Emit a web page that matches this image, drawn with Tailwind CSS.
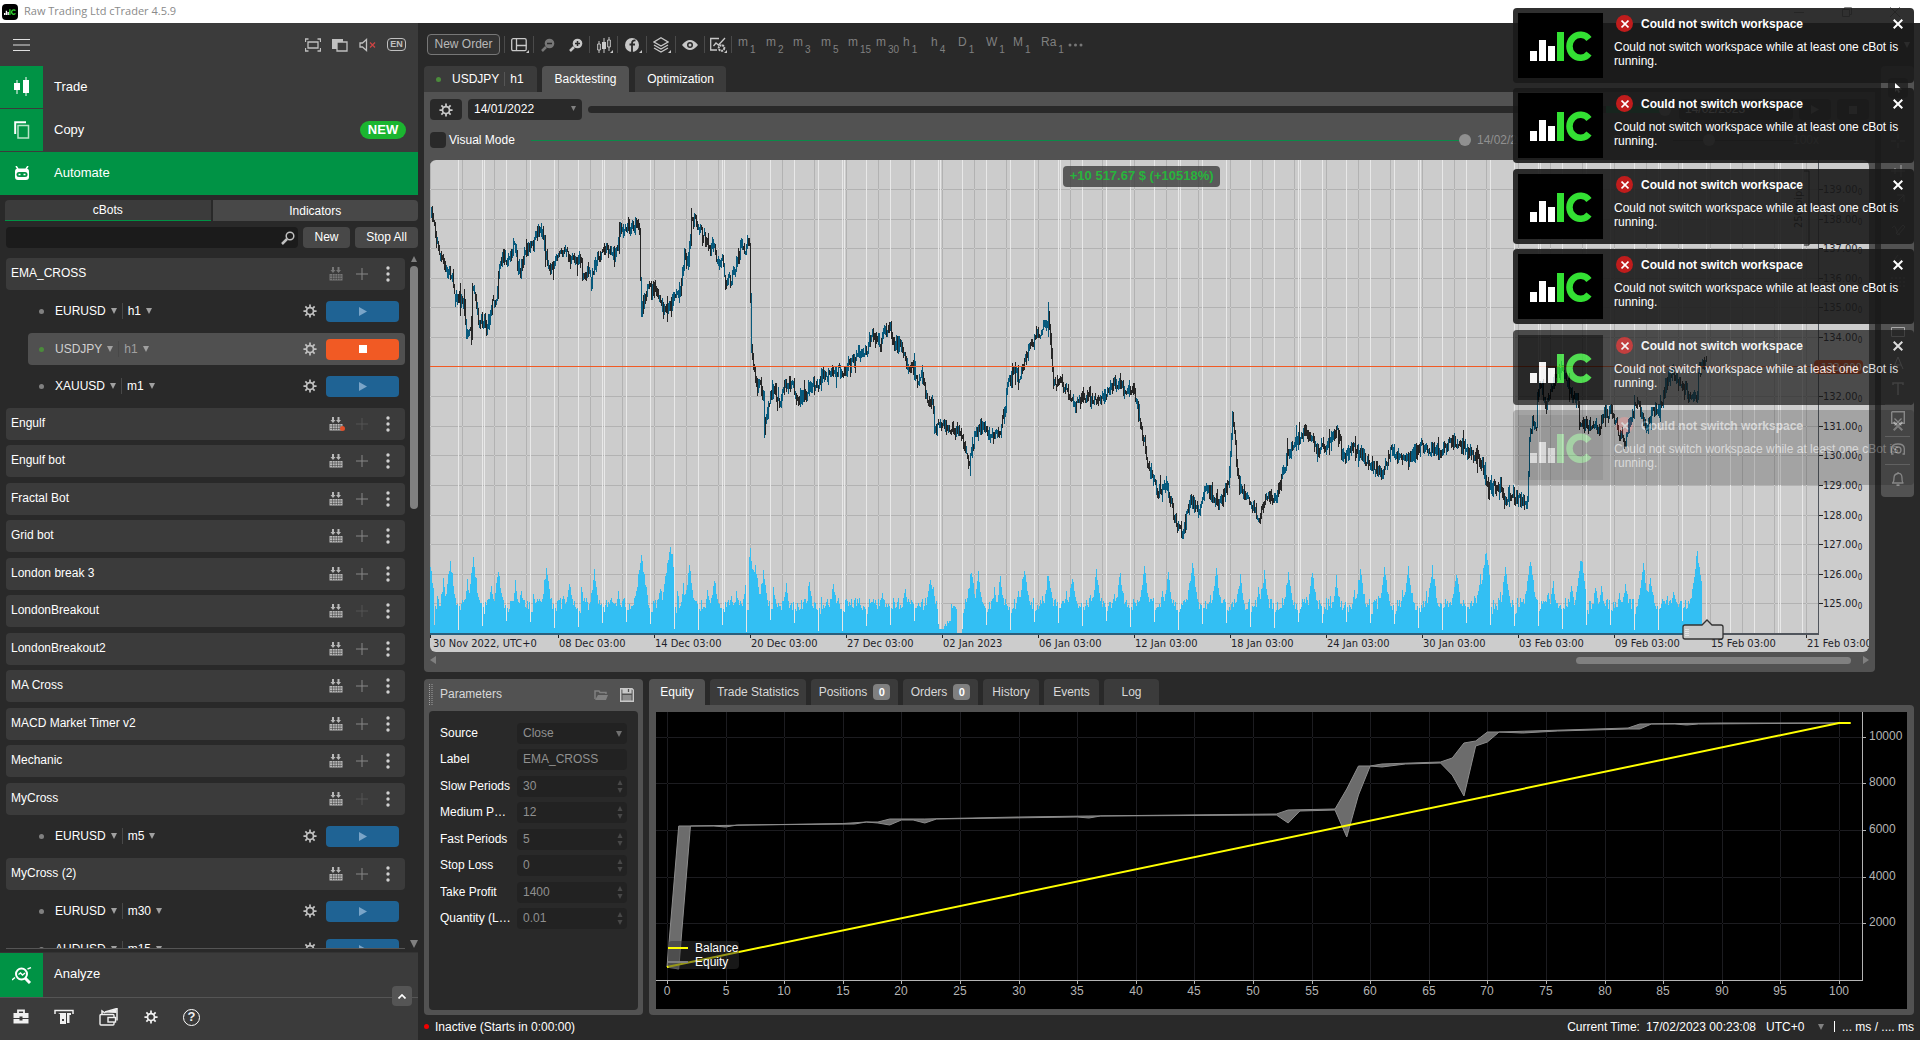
<!DOCTYPE html>
<html lang="en">
  <head>
    <meta charset="UTF-8" />
    <title>Raw Trading Ltd cTrader 4.5.9</title>
    <script src="https://cdn.jsdelivr.net/npm/@tailwindcss/browser@4"></script>
  </head>
  <body class="bg-[#292929] font-['Liberation_Sans',Arial,sans-serif] text-xs text-white">
    <!-- Icon sprite -->
    <svg class="hidden">
      <symbol id="gear" viewBox="0 0 16 16"><circle cx="8" cy="8" r="4" fill="none" stroke="currentColor" stroke-width="2" /><path d="M8 .5v3M8 12.5v3M.5 8h3M12.5 8h3M2.700 2.700l2.200 2.200M11.100 11.100l2.200 2.200M13.300 2.700l-2.200 2.200M4.900 11.100l-2.200 2.200" stroke="currentColor" stroke-width="2" /></symbol>
      <symbol id="build" viewBox="0 0 14 14"><path d="M3 0h2v3h1.500L4 6 1.500 3H3zM8.500 0h2v3H12L9.500 6 7 3h1.500z" fill="currentColor" /><path d="M.5 7h13v6.500H.5z" fill="currentColor" /><path d="M1 9h12M1 11.500h12M3.500 7v6M6 7v6M8.500 7v6M11 7v6" stroke="#3b3b3b" stroke-width=".5" /></symbol>
      <symbol id="plus" viewBox="0 0 12 12"><path d="M5.500 0h1v12h-1zM0 5.500h12v1H0z" fill="currentColor" /></symbol>
      <symbol id="dots" viewBox="0 0 4 16"><circle cx="2" cy="2" r="1.700" fill="currentColor" /><circle cx="2" cy="8" r="1.700" fill="currentColor" /><circle cx="2" cy="14" r="1.700" fill="currentColor" /></symbol>
      <symbol id="down" viewBox="0 0 6 6"><path d="M0 0h6L3 6z" fill="currentColor" /></symbol>
      <symbol id="up" viewBox="0 0 6 6"><path d="M0 6h6L3 0z" fill="currentColor" /></symbol>
      <symbol id="play" viewBox="0 0 8 9"><path d="M0 0l8 4.500L0 9z" fill="currentColor" /></symbol>
      <symbol id="cross" viewBox="0 0 10 10"><path d="M.7.7l8.600 8.600M9.300.7L.7 9.300" stroke="currentColor" stroke-width="2" /></symbol>
      <symbol id="corner" viewBox="0 0 4 4"><path d="M4 0v4H0z" fill="#c8c8c8" /></symbol>
      <symbol id="lens" viewBox="0 0 14 14"><circle cx="9" cy="5" r="3.800" fill="none" stroke="currentColor" stroke-width="1.500" /><path d="M6 8L1 13" stroke="currentColor" stroke-width="2.500" /></symbol>
      <symbol id="grip" viewBox="0 0 4 22"><path d="M.5 0v22M3 0v22" stroke="#a0a0a0" stroke-dasharray="1 1" /></symbol>
      <symbol id="iclogo" viewBox="0 0 62 30"><path d="M0 20h7v10H0zM9 9h7v21H9zM18 15h7v15h-7z" fill="#fff" /><path d="M27 1h7v29h-7z" fill="#33e033" /><path d="M59 8a11 11.500 0 1 0 0 14.500" fill="none" stroke="#33e033" stroke-width="6.500" /></symbol>
    </svg>

    <div class="relative flex h-screen flex-col overflow-hidden">
      <!-- Window title bar -->
      <header class="flex h-[23px] shrink-0 items-center gap-1.5 bg-white pl-0.5 font-['Open_Sans',sans-serif] text-[11px] text-[#8a8a8a]">
        <span class="flex size-4 items-center justify-center rounded-sm bg-black"><svg class="h-1.5 w-3"><use href="#iclogo" /></svg></span>
        <span class="flex-1">Raw Trading Ltd cTrader 4.5.9</span>
        <div class="flex items-center gap-[38px] pr-5 text-[#8a8a8a]">
          <button aria-label="Minimize"><svg class="h-2.5 w-2.5" viewBox="0 0 10 10"><path d="M0 5.500h10" stroke="currentColor" /></svg></button>
          <button aria-label="Restore"><svg class="h-2.5 w-2.5" viewBox="0 0 10 10"><path d="M.5 2.500h7v7h-7zM2.500 2.500v-2h7v7h-2" fill="none" stroke="currentColor" /></svg></button>
          <button aria-label="Close"><svg class="h-2.5 w-2.5" viewBox="0 0 10 10"><path d="M0 0l10 10M10 0L0 10" stroke="currentColor" /></svg></button>
        </div>
      </header>

      <div class="flex min-h-0 flex-1">
        <!-- Sidebar -->
        <aside class="flex w-[418px] shrink-0 flex-col">
          <div class="flex h-[43px] shrink-0 items-center bg-[#3b3b3b] pr-3 pl-[13px] text-[#c0c0c0]">
            <button aria-label="Menu"><svg class="h-3.5 w-[17px]" viewBox="0 0 17 14"><path d="M0 1.500h17M0 7h17M0 12.500h17" stroke="#e0e0e0" stroke-width="1.200" /></svg></button>
            <div class="ml-auto flex items-center gap-[11px]">
              <button aria-label="Full screen"><svg class="h-3.5 w-4" viewBox="0 0 16 14"><path d="M.5 4V1h3M12.500 1h3v3M15.500 10v3h-3M3.500 13h-3v-3M3 4h10v6H3z" fill="none" stroke="currentColor" stroke-width="1.300" /></svg></button>
              <button aria-label="Windows"><svg class="h-3.5 w-4" viewBox="0 0 16 14"><path d="M0 1h11v10H0z" fill="currentColor" /><path d="M5 4h10v9H5z" fill="#3b3b3b" stroke="currentColor" stroke-width="1.300" /></svg></button>
              <button aria-label="Sound"><svg class="h-3.5 w-[17px]" viewBox="0 0 17 14"><path d="M1 5h2.500L7.500 1.500v11L3.500 9H1z" fill="none" stroke="currentColor" stroke-width="1.300" /><path d="M11 4.500l5 5M16 4.500l-5 5" stroke="#c44" stroke-width="1.300" /></svg></button>
              <button class="h-[13px] w-[19px] rounded-sm border border-[#c0c0c0] text-[9px] leading-[11px] font-bold">EN</button>
            </div>
          </div>
          <nav class="shrink-0 bg-[#3b3b3b] text-[13px]">
            <a href="#trade" class="flex h-[43px] items-center gap-[11px] pb-0.5">
              <span class="flex h-[42px] w-[43px] items-center justify-center self-start bg-[#009345]"><svg class="h-5 w-4" viewBox="0 0 16 20"><path d="M3 3v14M12 0v19" stroke="#fff" /><path d="M0 6h6v7H0zM9 3h6v13H9z" fill="#fff" /></svg></span>Trade
            </a>
            <a href="#copy" class="flex h-[43px] items-center gap-[11px] pr-3 pb-0.5">
              <span class="flex h-[42px] w-[43px] items-center justify-center self-start bg-[#009345]"><svg class="h-[18px] w-4" viewBox="0 0 16 18"><path d="M4 4.500h10.500V17H4z" fill="none" stroke="#b8e4c8" stroke-width="1.500" /><path d="M1.200 13V1.200H12" fill="none" stroke="#fff" stroke-width="2" /></svg></span>Copy
              <span class="ml-auto flex h-[18px] w-[46px] items-center justify-center rounded-full bg-[#1bb530] font-bold">NEW</span>
            </a>
            <a href="#automate" class="flex h-[43px] items-center gap-[11px] bg-[#009345] pb-0.5">
              <span class="flex w-[43px] justify-center"><svg class="h-3.5 w-4" viewBox="0 0 16 14"><path d="M2 0l2 3M14 0l-2 3" stroke="#fff" stroke-width="1.500" /><path d="M4 2.500h8q3 0 3 3V11q0 3-3 3H4q-3 0-3-3V5.500q0-3 3-3z" fill="#fff" /><rect x="2.500" y="6" width="11" height="5" rx="2.500" fill="#009345" /><path d="M4.500 8.500h2M9.500 8.500h2" stroke="#fff" stroke-width="1.500" /></svg></span>Automate
            </a>
          </nav>

          <div class="mt-[5px] ml-[5px] flex h-[21px] shrink-0 gap-0.5">
            <button class="flex-1 rounded-tl border-b border-[#009345] bg-[#3b3b3b]">cBots</button>
            <button class="flex-1 rounded-r bg-[#484848]">Indicators</button>
          </div>
          <div class="mt-1.5 ml-1.5 flex h-[21px] shrink-0 gap-[5px]">
            <label class="flex flex-1 items-center rounded bg-[#1b1b1b] pr-[3px] text-[#c0c0c0]">
              <input type="text" aria-label="Search cBots" class="min-w-0 flex-1 bg-transparent px-2 outline-none" />
              <svg class="h-3.5 w-3.5"><use href="#lens" /></svg>
            </label>
            <button class="w-[47px] rounded bg-[#484848] pb-0.5">New</button>
            <button class="w-[63px] rounded bg-[#484848] pb-0.5">Stop All</button>
          </div>

          <!-- cBot list -->
          <div class="mt-2 flex min-h-0 flex-1 gap-[5px] pl-1.5">
            <div class="relative mt-0.5 mb-[3px] flex-1 overflow-hidden border-b border-[#555]">
              <ul id="bots"></ul>
            </div>
            <div class="flex w-2 flex-col items-center text-[#808080]">
              <svg class="h-1.5 w-2"><use href="#up" /></svg>
              <div class="mt-1 h-[243px] w-2 rounded bg-[#808080]"></div>
              <svg class="mt-auto mb-1 h-2 w-2"><use href="#down" /></svg>
            </div>
          </div>

          <div class="relative shrink-0 border-t border-[#333] bg-[#3b3b3b]">
            <a href="#analyze" class="flex h-[45px] items-center gap-[11px] border-b border-[#555] text-[13px]">
              <span class="flex w-[43px] items-center justify-center self-stretch bg-[#009345]"><svg class="h-[17px] w-5" viewBox="0 0 20 17"><circle cx="9.500" cy="7" r="5.500" fill="none" stroke="#fff" stroke-width="2" /><path d="M13 11l5 5" stroke="#fff" stroke-width="3" /><path d="M6.500 7.500L8.500 6l2 2L13 6M0 13l3-2.500M15.500 2L19 .7" fill="none" stroke="#fff" stroke-width="1.400" /></svg></span><span class="pb-0.5">Analyze</span>
            </a>
            <button aria-label="Collapse" class="absolute top-[33px] right-1.5 flex h-5 w-5 items-center justify-center rounded bg-[#555]"><svg class="h-[5px] w-2" viewBox="0 0 8 5"><path d="M.5 4.500L4 1l3.500 3.500" fill="none" stroke="#fff" stroke-width="1.700" /></svg></button>
            <div class="flex h-[42px] items-center gap-[25px] pb-1 pl-[13px] text-[#f0f0f0]">
              <button aria-label="Accounts"><svg class="h-4 w-4" viewBox="0 0 16 16"><path d="M5 4V1.500h6V4" fill="none" stroke="currentColor" stroke-width="1.800" /><path d="M.5 4h15v5h-6V7.500h-3V9h-6zM.5 10h6v1.500h3V10h6v4.500H.5z" fill="currentColor" /></svg></button>
              <button aria-label="Deposit"><svg class="h-4 w-5" viewBox="0 0 20 16"><path d="M1 5V1.500h18V5" fill="none" stroke="currentColor" stroke-width="1.500" /><path d="M4 4h8v11H6V5z M13 4h4v2h-1.500v8H13z" fill="currentColor" /><path d="M8 11h2" stroke="#3b3b3b" stroke-width="2" /></svg></button>
              <button aria-label="Wallet"><svg class="h-[18px] w-5" viewBox="0 0 20 18"><path d="M6 4l12-3.500v12M3 6V3l3 2" fill="none" stroke="currentColor" stroke-width="1.500" /><path d="M5 4.500L17.500 1v4z" fill="currentColor" /><rect x="1" y="6.500" width="14" height="10.500" rx="1" fill="#3b3b3b" stroke="currentColor" stroke-width="1.400" /><rect x="9" y="9.500" width="7.500" height="4.500" fill="#3b3b3b" stroke="currentColor" stroke-width="1.400" /></svg></button>
              <button aria-label="Settings"><svg class="h-3.5 w-3.5"><use href="#gear" /></svg></button>
              <button aria-label="Help" class="flex size-[17px] items-center justify-center rounded-full border border-white text-[13px] font-bold">?</button>
            </div>
          </div>
        </aside>

        <!-- Workspace -->
        <main class="flex min-w-0 flex-1 flex-col pr-1.5 pl-1.5">
          <!-- Toolbar -->
          <div class="flex h-[43px] shrink-0 items-center pl-[3px] text-[#c8c8c8]">
            <button class="h-[21px] w-[73px] rounded border border-[#777] bg-[#333] pb-0.5 text-[#b8b8b8]">New Order</button>
            <div class="ml-1 flex h-[17px] items-stretch">
              <button aria-label="Layout" class="relative flex w-[29px] items-center justify-center border-l border-[#4a4a4a]"><svg class="h-3.5 w-4" viewBox="0 0 16 14"><rect x=".7" y=".7" width="14.500" height="12" rx="1.500" fill="none" stroke="currentColor" stroke-width="1.300" /><path d="M5.500 1v12M5.500 7.500h10" stroke="currentColor" stroke-width="1.300" /></svg><svg class="absolute right-1 bottom-0 h-[3px] w-[3px]"><use href="#corner" /></svg></button>
              <button aria-label="Zoom out" class="flex w-[29px] items-center justify-center border-l border-[#4a4a4a] text-[#777]"><svg class="h-3.5 w-3.5" viewBox="0 0 14 14"><circle cx="8.500" cy="5.500" r="4.800" fill="currentColor" /><path d="M5 9l-4 4" stroke="currentColor" stroke-width="2.500" /><path d="M6 5.500h5" stroke="#292929" stroke-width="1.500" /></svg></button>
              <button aria-label="Zoom in" class="flex w-[27px] items-center justify-center"><svg class="h-3.5 w-3.5" viewBox="0 0 14 14"><circle cx="8.500" cy="5.500" r="4.800" fill="currentColor" /><path d="M5 9l-4 4" stroke="currentColor" stroke-width="2.500" /><path d="M6 5.500h5M8.500 3v5" stroke="#292929" stroke-width="1.500" /></svg></button>
              <button aria-label="Chart type" class="relative flex w-7 items-center justify-center border-l border-[#4a4a4a]"><svg class="h-4 w-3.5" viewBox="0 0 14 16"><path d="M2 4v12M7 1v15M12 0v14" stroke="currentColor" /><path d="M.7 7h2.600v6H.7zM10.700 3h2.600v7h-2.600z" fill="#292929" stroke="currentColor" /><path d="M5 5h4v7H5z" fill="currentColor" /></svg><svg class="absolute right-1 bottom-0 h-[3px] w-[3px]"><use href="#corner" /></svg></button>
              <button aria-label="Indicators" class="relative flex w-[29px] items-center justify-center border-l border-[#4a4a4a]"><svg class="h-3.5 w-3.5" viewBox="0 0 14 14"><circle cx="7" cy="7" r="7" fill="currentColor" /><path d="M10.500 2.500Q7 2 7 5.500V14M4.500 6.500h5.500" fill="none" stroke="#292929" stroke-width="1.800" /></svg><svg class="absolute right-1 bottom-0 h-[3px] w-[3px]"><use href="#corner" /></svg></button>
              <button aria-label="Layers" class="relative flex w-[29px] items-center justify-center border-l border-[#4a4a4a]"><svg class="h-4 w-4" viewBox="0 0 16 16"><path d="M8 .8L15 5 8 9 1 5zM1 8l7 4 7-4M1 11l7 4 7-4" fill="none" stroke="currentColor" stroke-width="1.300" /></svg><svg class="absolute right-1 bottom-0 h-[3px] w-[3px]"><use href="#corner" /></svg></button>
              <button aria-label="View" class="flex w-[29px] items-center justify-center border-l border-[#4a4a4a]"><svg class="h-2.5 w-4" viewBox="0 0 16 10"><path d="M0 5q8-10 16 0-8 10-16 0z" fill="currentColor" /><circle cx="8" cy="5" r="3" fill="#292929" /><circle cx="8" cy="5" r="1.500" fill="currentColor" /></svg></button>
              <button aria-label="Chart settings" class="relative flex w-7 items-center justify-center border-x border-[#4a4a4a]"><svg class="h-4 w-[17px]" viewBox="0 0 17 16"><path d="M9 1.500H.7v11.500H7M3.500 9l2.500-3 2.500 2L15 1" fill="none" stroke="currentColor" stroke-width="1.300" /><circle cx="11.500" cy="11" r="2.800" fill="none" stroke="currentColor" stroke-width="2" stroke-dasharray="2 .7" /></svg><svg class="absolute right-1 bottom-0 h-[3px] w-[3px]"><use href="#corner" /></svg></button>
            </div>
            <div id="timeframes" class="ml-1.5 flex text-[#808080]"></div>
            <svg class="h-1 w-[15px] text-[#777]" viewBox="0 0 15 4"><circle cx="2" cy="2" r="1.500" fill="currentColor" /><circle cx="7.500" cy="2" r="1.500" fill="currentColor" /><circle cx="13" cy="2" r="1.500" fill="currentColor" /></svg>
            <svg class="mr-1 ml-auto h-1.5 w-1.5"><use href="#down" /></svg>
          </div>

          <div class="flex min-h-0 flex-1 gap-1.5">
            <section class="flex min-w-0 flex-1 flex-col">
              <div class="flex h-[26px] shrink-0 gap-[5px]">
                <button class="flex w-[113px] items-center rounded-t bg-[#3b3b3b] pl-3"><span class="mr-[11px] size-[5px] rounded-full bg-[#4b8b3b]"></span>USDJPY<span class="mx-[5px] h-3.5 w-px bg-[#555]"></span>h1</button>
                <button class="w-[87px] rounded-t bg-[#525252]">Backtesting</button>
                <button class="ml-px w-[91px] rounded-t bg-[#3b3b3b]">Optimization</button>
              </div>
              <div class="flex min-h-0 flex-1 flex-col rounded-b bg-[#525252] px-1.5 pt-[7px]">
                <div class="flex h-[21px] shrink-0 items-center gap-1.5">
                  <button aria-label="Backtesting settings" class="flex h-[21px] w-8 items-center justify-center rounded bg-[#292929] text-[#c8c8c8]"><svg class="h-3.5 w-3.5"><use href="#gear" /></svg></button>
                  <button class="flex h-[21px] w-[114px] items-center justify-between rounded bg-[#292929] px-1.5 pb-0.5">14/01/2022<svg class="h-[5px] w-[5px] text-[#808080]"><use href="#down" /></svg></button>
                  <input type="range" value="100" aria-label="Period" class="h-[7px] min-w-0 flex-1 appearance-none rounded bg-[linear-gradient(to_right,#292929_94%,#009345_94%)] [&::-webkit-slider-thumb]:size-3 [&::-webkit-slider-thumb]:appearance-none [&::-webkit-slider-thumb]:rounded-full [&::-webkit-slider-thumb]:bg-[#909090]" />
                  <button class="ml-0.5 flex h-[21px] w-[114px] items-center justify-between rounded bg-[#292929] px-1.5 pb-0.5">14/02/2023<svg class="h-[5px] w-[5px] text-[#808080]"><use href="#down" /></svg></button>
                  <button aria-label="Start" class="flex h-[21px] w-8 items-center justify-center rounded bg-[#292929] text-[#808080]"><svg class="h-[9px] w-2"><use href="#play" /></svg></button>
                  <button aria-label="Stop" class="flex h-[21px] w-8 items-center justify-center rounded bg-[#292929]"><span class="size-2 bg-[#808080]"></span></button>
                </div>
                <div class="flex h-10 shrink-0 items-center text-[#909090]">
                  <label class="flex items-center gap-[3px] text-white"><input type="checkbox" class="size-4 appearance-none rounded bg-[#292929]" />Visual Mode</label>
                  <input type="range" value="100" aria-label="Position" class="ml-4 h-px min-w-0 flex-1 appearance-none bg-[#0a8a48] [&::-webkit-slider-thumb]:size-3 [&::-webkit-slider-thumb]:appearance-none [&::-webkit-slider-thumb]:rounded-full [&::-webkit-slider-thumb]:bg-[#909090]" />
                  <span class="ml-1.5 w-[136px] whitespace-nowrap">14/02/2022 03:00</span>
                  <span class="w-[60px]">Speed</span>
                  <input type="range" value="28" aria-label="Speed" class="h-px w-[120px] appearance-none bg-[#292929] [&::-webkit-slider-thumb]:size-3 [&::-webkit-slider-thumb]:appearance-none [&::-webkit-slider-thumb]:rounded-full [&::-webkit-slider-thumb]:bg-[#909090]" />
                  <span class="w-[76px]">100x</span>
                </div>
                <div class="relative min-h-0 flex-1 overflow-hidden rounded-md bg-[#ccc]">
                  <svg id="price" class="block h-full w-full font-['DejaVu_Sans_Condensed','DejaVu_Sans',sans-serif] text-[11px]"></svg>
                  <span class="absolute top-1.5 left-[44%] flex h-[21px] w-[157px] items-center justify-center rounded bg-[#3c3c3c]/80 pb-0.5 text-[13px] font-bold text-[#28b43c]">+10 517.67 $ (+10518%)</span>
                </div>
                <div class="flex h-5 shrink-0 items-center justify-between text-[#808080]">
                  <svg class="mb-1 h-2 w-1.5" viewBox="0 0 6 8"><path d="M6 0v8L0 4z" fill="currentColor" /></svg>
                  <div class="mr-3 mb-1 ml-auto h-[7px] w-[275px] rounded bg-[#808080]"></div>
                  <svg class="mb-1 h-2 w-1.5" viewBox="0 0 6 8"><path d="M0 0v8l6-4z" fill="currentColor" /></svg>
                </div>
              </div>
            </section>

            <!-- Drawing tools -->
            <div class="flex h-[431px] w-[33px] shrink-0 flex-col items-center gap-2 rounded bg-[#525252] pt-3 text-[#a8a8a8]">
              <button aria-label="Cursor" class="flex h-5 w-5 items-center justify-center rounded bg-[#292929] text-white"><svg class="h-2.5 w-2" viewBox="0 0 8 10"><path d="M1 0v9l2-2 1.500 3 1.500-1-1.500-2.500H8z" fill="currentColor" /></svg></button>
              <button aria-label="Crosshair" class="mt-7"><svg class="h-3.5 w-3.5" viewBox="0 0 14 14"><path d="M7 0v5M7 9v5M0 7h5M9 7h5" stroke="currentColor" /></svg></button>
              <button aria-label="Levels" class="mt-2"><svg class="h-3.5 w-3.5" viewBox="0 0 14 14"><path d="M0 7h14M10 1v12M4 4v6" stroke="currentColor" /></svg></button>
              <button aria-label="Arrow" class="mt-2"><svg class="h-3.5 w-3.5" viewBox="0 0 14 14"><path d="M1 13L13 1M6 1h7v7" fill="none" stroke="currentColor" /></svg></button>
              <button aria-label="Brush" class="mt-2"><svg class="h-3.5 w-3.5" viewBox="0 0 14 14"><path d="M1 4q3-4 4 1t4 6M5 9l7-8 2 2-7 8z" fill="none" stroke="currentColor" /></svg></button>
              <button aria-label="Pitchfork" class="mt-2"><svg class="h-3.5 w-3.5" viewBox="0 0 14 14"><path d="M1 9l6-8M4 12l6-8M8 13l5-7" stroke="currentColor" /></svg></button>
              <button aria-label="Fibonacci"><svg class="h-3.5 w-3.5" viewBox="0 0 14 14"><path d="M0 2h14M0 6h14M0 10h14" stroke="currentColor" stroke-dasharray="2 2" /></svg></button>
              <button aria-label="Shapes" class="mt-7"><svg class="h-3.5 w-3.5" viewBox="0 0 14 14"><path d="M.5 1.500h13v9H.5z" fill="none" stroke="currentColor" /></svg></button>
              <button aria-label="Triangle" class="mt-2"><svg class="h-3.5 w-3.5" viewBox="0 0 14 14"><path d="M2 13L7 1l5 12M4 9h6" fill="none" stroke="currentColor" /></svg></button>
              <button aria-label="Text" class="mt-1"><svg class="h-3.5 w-3.5" viewBox="0 0 14 14"><path d="M2 3V1h10v2M7 1v12" fill="none" stroke="currentColor" stroke-width="1.500" /></svg></button>
              <button aria-label="Snapshot" class="flex h-6 w-[25px] items-center justify-center border-t border-[#777] pt-1"><svg class="h-4 w-3.5" viewBox="0 0 14 16"><path d="M.7.7h12.600v11.600H9.500M4.500 12.300H.7V.7" fill="none" stroke="currentColor" stroke-width="1.400" /><path d="M3.500 7.500l7 7M10.500 7.500l-7 7" stroke="currentColor" stroke-width="1.400" /></svg></button>
              <button aria-label="Camera" class="flex h-5 w-[25px] items-center justify-center border-t border-[#777] pt-1"><svg class="h-3 w-3.5" viewBox="0 0 14 12"><path d="M2.500 11H.7V5.500Q1 1 7 1t6.300 4.500V11h-1.800" fill="none" stroke="currentColor" stroke-width="1.300" /><circle cx="7" cy="7" r="3" fill="none" stroke="currentColor" stroke-width="1.300" /></svg></button>
              <button aria-label="Alerts" class="flex h-6 w-[25px] items-center justify-center border-t border-[#777] pt-1"><svg class="h-3.5 w-3" viewBox="0 0 12 14"><path d="M.5 11Q2 10 2 6t4-4.500T10 6t1.500 5zM4.500 13h3M6 0v1.500" fill="none" stroke="currentColor" stroke-width="1.300" /></svg></button>
            </div>
          </div>

          <div class="mt-[7px] flex h-[336px] shrink-0 gap-1.5">
            <!-- Parameters -->
            <section class="flex w-[219px] shrink-0 flex-col rounded bg-[#525252] p-[5px] pt-0">
              <div class="flex h-8 items-center text-[#d8d8d8]">
                <svg class="h-[22px] w-1"><use href="#grip" /></svg>
                <h2 class="ml-[7px] flex-1 pb-0.5">Parameters</h2>
                <button aria-label="Open" class="text-[#808080]"><svg class="h-3 w-3.5" viewBox="0 0 14 12"><path d="M1 10V2h4l1 1.500h6V5" fill="none" stroke="currentColor" stroke-width="1.500" /><path d="M4 6h10l-2 5H1z" fill="currentColor" /></svg></button>
                <button aria-label="Save" class="mr-1 ml-3 text-[#c8c8c8]"><svg class="h-3.5 w-3.5" viewBox="0 0 14 14"><path d="M.7.7H12l1.300 1.300v11.300H.7z" fill="none" stroke="currentColor" stroke-width="1.400" /><path d="M3 0h8v5H3zM2.500 8h9M2.500 10h9M2.500 12h9" fill="currentColor" stroke="currentColor" stroke-width="1.200" /><path d="M8.500 1v3" stroke="#525252" stroke-width="1.300" /></svg></button>
              </div>
              <div id="params" class="flex-1 rounded bg-[#292929] pt-3 pr-[11px] pl-[11px]"></div>
            </section>

            <!-- Results -->
            <section class="flex min-w-0 flex-1 flex-col">
              <div class="flex h-[26px] shrink-0 gap-[5px] text-[#d8d8d8]">
                <button class="w-14 rounded-t bg-[#525252] text-white">Equity</button>
                <button class="w-24 rounded-t bg-[#3b3b3b]">Trade Statistics</button>
                <button class="flex w-[87px] items-center justify-center gap-1.5 rounded-t bg-[#3b3b3b]">Positions<span class="w-[17px] rounded bg-[#808080] text-[11px] leading-4 font-bold text-white">0</span></button>
                <button class="flex w-[75px] items-center justify-center gap-1.5 rounded-t bg-[#3b3b3b]">Orders<span class="w-[17px] rounded bg-[#808080] text-[11px] leading-4 font-bold text-white">0</span></button>
                <button class="w-14 rounded-t bg-[#3b3b3b]">History</button>
                <button class="w-[55px] rounded-t bg-[#3b3b3b]">Events</button>
                <button class="w-[55px] rounded-t bg-[#3b3b3b]">Log</button>
              </div>
              <div class="min-h-0 flex-1 rounded-b rounded-tr bg-[#525252] px-[7px] pt-[7px] pb-1.5">
                <div class="relative h-full bg-black">
                  <svg id="equity" class="block h-full w-full"></svg>
                  <div class="absolute bottom-10 left-3 flex w-[71px] flex-col rounded bg-[#303030]/50 leading-3.5">
                    <span class="flex items-center gap-[7px]"><i class="h-0.5 w-5 bg-[#ffff00]"></i>Balance</span>
                    <span class="flex items-center gap-[7px]"><i class="h-0.5 w-5 bg-[#808080]"></i>Equity</span>
                  </div>
                </div>
              </div>
            </section>
          </div>

          <!-- Status bar -->
          <footer class="flex h-[25px] shrink-0 items-center pb-0.5">
            <span class="mr-1.5 size-[5px] rounded-full bg-[#f00000]"></span>Inactive (Starts in 0:00:00)
            <span class="ml-auto">Current Time:</span>
            <span class="ml-1.5">17/02/2023 00:23:08</span>
            <label class="ml-2.5 flex items-center"><select aria-label="Time zone" class="w-[52px] appearance-none bg-transparent"><option>UTC+0</option></select><svg class="h-1.5 w-1.5 text-[#808080]"><use href="#down" /></svg></label>
            <span class="mr-[7px] ml-2.5 h-[11px] w-px bg-white"></span>... ms / .... ms
          </footer>
        </main>
      </div>

      <!-- Notifications -->
      <div id="toasts" class="absolute top-2 right-1.5 w-[401px]"></div>
    </div>

    <script>
      const icon = (id, cls) => `<svg class="${cls}"><use href="#${id}" /></svg>`;

      // cBots with their instances: [symbol, timeframe, running]
      const bots = [
        { name: "EMA_CROSS", busy: true, runs: [["EURUSD", "h1"], ["USDJPY", "h1", true], ["XAUUSD", "m1"]] },
        { name: "Engulf", failed: true, noAdd: true },
        { name: "Engulf bot" },
        { name: "Fractal Bot" },
        { name: "Grid bot" },
        { name: "London break 3" },
        { name: "LondonBreakout", noAdd: true },
        { name: "LondonBreakout2" },
        { name: "MA Cross" },
        { name: "MACD Market Timer v2" },
        { name: "Mechanic" },
        { name: "MyCross", noAdd: true, runs: [["EURUSD", "m5"]] },
        { name: "MyCross (2)", runs: [["EURUSD", "m30"], ["AUDUSD", "m15"]] },
      ];
      const botRow = (b) => `
        <li class="flex h-8 items-center rounded bg-[#3b3b3b] pr-[15px] pl-[5px] odd:mb-[5px] even:mb-1.5">
          <span class="flex-1 pb-0.5">${b.name}</span>
          <button aria-label="Build" class="relative ${b.busy ? "text-[#777]" : "text-[#b8b8b8]"}">${icon("build", "h-3.5 w-3.5")}${b.failed ? '<span class="absolute -right-0.5 bottom-0 size-[5px] rounded-full bg-[#e0502a]"></span>' : ""}</button>
          <button aria-label="Add instance" class="ml-[13px] ${b.noAdd ? "text-[#555]" : "text-[#888]"}">${icon("plus", "h-3 w-3")}</button>
          <button aria-label="More" class="ml-[18px] text-[#d0d0d0]">${icon("dots", "h-4 w-1")}</button>
        </li>`;
      const runRow = ([symbol, tf, on]) => `
        <li class="ml-[22px] flex h-8 items-center rounded pr-1.5 pl-[11px] odd:mb-[5px] even:mb-1.5 ${on ? "bg-[#505050] text-[#d0d0d0]" : ""}">
          <span class="size-[5px] rounded-full ${on ? "bg-[#4b8b3b]" : "bg-[#808080]"}"></span>
          <button class="ml-[11px] flex items-center gap-[5px]">${symbol}${icon("down", "h-1.5 w-1.5 text-[#a0a0a0]")}</button>
          <span class="mx-[5px] h-4 w-px bg-[#484848]"></span>
          <button class="flex items-center gap-[5px] ${on ? "text-[#a0a0a0]" : ""}">${tf}${icon("down", "h-1.5 w-1.5 text-[#a0a0a0]")}</button>
          <button aria-label="Settings" class="mr-[9px] ml-auto text-[#c0c0c0]">${icon("gear", "h-3.5 w-3.5")}</button>
          <button aria-label="${on ? "Stop" : "Start"}" class="flex h-[21px] w-[73px] items-center justify-center rounded ${on ? "bg-[#f15a24]" : "bg-[#1f6394] text-[#7aa5c8]"}">${on ? '<span class="size-2 bg-white"></span>' : icon("play", "h-[9px] w-2")}</button>
        </li>`;
      document.getElementById("bots").innerHTML = bots
        .map((b) => botRow(b) + (b.runs || []).map(runRow).join(""))
        .join("");

      const frames = ["m 1", "m 2", "m 3", "m 5", "m 15", "m 30", "h 1", "h 4", "D 1", "W 1", "M 1", "Ra 1"];
      document.getElementById("timeframes").innerHTML = frames
        .map((f, i) => {
          const [unit, n] = f.split(" ");
          return `<button class="flex h-5 shrink-0 gap-0.5 text-left leading-3.5 ${i % 2 ? "w-[27px]" : "w-7"}">${unit}<span class="self-end text-[10px] leading-[10px]">${n}</span></button>`;
        })
        .join("");

      const params = [["Source", "Close"], ["Label", "EMA_CROSS"], ["Slow Periods", "30"], ["Medium Periods", "12"], ["Fast Periods", "5"], ["Stop Loss", "0"], ["Take Profit", "1400"], ["Quantity (Lots)", "0.01"]];
      document.getElementById("params").innerHTML = params
        .map(([label, value], i) => {
          const field = i === 0
            ? `<select id="p0" class="min-w-0 flex-1 appearance-none bg-transparent pb-0.5"><option>${value}</option></select>${icon("down", "mr-[5px] h-1.5 w-1.5 text-[#707070]")}`
            : `<input id="p${i}" type="text" value="${value}" class="min-w-0 flex-1 bg-transparent pb-0.5 outline-none" />`;
          const arrows = i > 1
            ? `<span class="mr-1 flex flex-col gap-[3px] text-[#484848]">${icon("up", "h-[5px] w-1.5")}${icon("down", "h-[5px] w-1.5")}</span>`
            : "";
          return `<div class="flex h-[21px] items-center odd:mb-[5px] even:mb-1.5">
            <label for="p${i}" class="w-[77px] truncate pr-1.5 pb-0.5">${label}</label>
            <div class="flex h-[21px] min-w-0 flex-1 items-center rounded bg-[#222] pl-1.5 text-[#909090]">${field}${arrows}</div>
          </div>`;
        })
        .join("");

      const fades = ["opacity-100", "opacity-100", "opacity-100", "opacity-100", "opacity-80", "opacity-25"];
      document.getElementById("toasts").innerHTML = fades
        .map((fade) => `
        <div role="alert" class="flex h-[75px] rounded bg-[#1a1a1a]/90 pt-[5px] pl-[5px] odd:mb-[5px] even:mb-1.5 ${fade}">
          <div class="flex h-[65px] w-[85px] shrink-0 items-center justify-center bg-black">${icon("iclogo", "h-[30px] w-[62px]")}</div>
          <div class="flex-1 pl-[11px]">
            <div class="flex items-center pt-0.5 pl-0.5">
              <span class="flex size-[17px] items-center justify-center rounded-full bg-[#c01c1c]">${icon("cross", "h-2 w-2")}</span>
              <h3 class="ml-2 flex-1 font-bold">Could not switch workspace</h3>
              <button aria-label="Dismiss" class="mr-[11px]">${icon("cross", "h-2.5 w-2.5")}</button>
            </div>
            <p class="mt-2 w-[290px] leading-3.5">Could not switch workspace while at least one cBot is running.</p>
          </div>
        </div>`)
        .join("");

      // Small seeded generator so the bars look the same on each draw
      let seed = 7;
      const rnd = () => (seed = (seed * 16807) % 2147483647) / 2147483647;

      // Swing points of the price line (bar, height)
      const swings = [[0,55],[4,60],[6,80],[10,95],[15,110],[20,110],[24,130],[28,140],[34,145],[36,175],[38,172],[41,172],[42,132],[45,142],[49,165],[54,158],[57,168],[61,145],[66,138],[69,105],[74,95],[78,102],[81,90],[84,85],[89,115],[95,90],[103,85],[107,70],[112,70],[115,95],[120,108],[125,102],[129,87],[135,92],[140,102],[149,96],[153,120],[158,110],[161,124],[164,102],[172,92],[178,87],[184,98],[190,70],[195,68],[201,67],[206,65],[209,75],[211,150],[216,130],[225,130],[231,145],[234,152],[240,145],[244,134],[250,130],[254,95],[258,102],[261,65],[263,57],[270,68],[278,85],[283,85],[288,108],[292,98],[295,120],[301,118],[307,102],[310,88],[315,88],[318,78],[319,80],[321,190],[324,215],[327,230],[330,222],[333,240],[334,268],[338,245],[344,228],[350,245],[355,225],[362,225],[368,242],[375,235],[380,225],[388,225],[392,215],[400,218],[404,210],[415,210],[422,202],[427,192],[436,190],[441,175],[448,180],[450,190],[454,170],[459,165],[464,185],[472,185],[476,205],[484,208],[487,220],[492,218],[496,240],[502,245],[504,268],[510,267],[522,270],[532,272],[534,290],[538,307],[543,280],[550,265],[562,275],[570,272],[576,235],[582,210],[590,218],[598,190],[606,175],[611,172],[618,158],[623,222],[633,226],[645,245],[654,234],[666,242],[678,230],[687,222],[696,230],[703,230],[711,268],[719,311],[727,330],[736,324],[743,354],[752,373],[760,342],[770,348],[776,328],[788,342],[795,330],[799,318],[802,252],[804,275],[809,330],[819,342],[829,358],[835,336],[846,338],[856,299],[864,283],[875,271],[886,287],[896,290],[907,272],[913,299],[923,287],[935,299],[951,315],[960,293],[978,299],[990,287],[1009,293],[1021,281],[1039,291],[1052,305],[1058,330],[1070,325],[1075,345],[1082,335],[1090,340],[1097,343],[1099,280],[1102,262],[1106,262],[1107,240],[1109,225],[1116,245],[1122,225],[1130,210],[1135,218],[1140,232],[1147,240],[1150,270],[1155,265],[1165,265],[1168,272],[1173,255],[1182,252],[1188,270],[1195,280],[1202,252],[1208,242],[1213,265],[1217,268],[1222,248],[1230,248],[1235,225],[1243,212],[1250,225],[1260,238],[1267,235],[1268,210],[1276,205]];

      // Volume peaks (bar, top)
      const peaks = [[0,402],[6,421],[13,418],[20,399],[37,417],[43,397],[54,430],[61,424],[68,408],[85,419],[91,424],[102,422],[116,405],[133,430],[139,417],[151,423],[156,432],[164,409],[174,442],[181,433],[188,429],[205,431],[211,392],[222,434],[230,424],[235,423],[240,380],[253,422],[259,404],[277,426],[284,415],[301,430],[306,430],[320,388],[325,402],[333,409],[342,420],[356,420],[367,437],[379,419],[390,430],[403,420],[427,436],[438,432],[452,430],[475,425],[500,413],[503,427],[524,440],[541,407],[548,410]];
      for (let d = 556; d < 1040; d += 24) peaks.push([d + 8, 425 + rnd() * 12], [d + 14, 400 + rnd() * 16]);
      peaks.push([1045,434],[1052,415],[1056,386],[1061,434],[1070,432],[1075,406],[1085,440],[1092,438],[1100,397],[1109,434],[1118,427],[1123,420],[1141,420],[1151,394],[1158,442],[1165,423],[1171,423],[1189,430],[1195,420],[1206,438],[1213,403],[1220,414],[1230,442],[1237,432],[1243,424],[1254,444],[1261,432],[1267,388]);

      const dates = ["30 Nov 2022, UTC+0", "08 Dec 03:00", "14 Dec 03:00", "20 Dec 03:00", "27 Dec 03:00", "02 Jan 2023", "06 Jan 03:00", "12 Jan 03:00", "18 Jan 03:00", "24 Jan 03:00", "30 Jan 03:00", "03 Feb 03:00", "09 Feb 03:00", "15 Feb 03:00", "21 Feb 03:00"];

      function drawPrice(svg, width) {
        seed = 7;
        const right = width - 50;
        const k = right / 1389;
        const X = (x) => Math.round(x * k);
        let grey = "", white = "", up = "", down = "", vol = "", text = "";
        for (let x = 0; x < 1389; x += 32) grey += `M${X(x)} 0h1v474h-1z`;
        for (let i = 0; i < 15; i++) {
          // The last price sits on the 133 line and is drawn over it
          if (i === 6) continue;
          const y = Math.round(29 + i * 29.6);
          grey += `M0 ${y}v1h${right}v-1z`;
          text += `<path d="M${right} ${y}h4v1h-4z" fill="#222" /><text x="${right + 4}" y="${y + 4}">${139 - i}.00<tspan font-size="8" dy="2">0</tspan></text>`;
        }
        // Day separators, doubled where a weekend is skipped
        const weekends = [52, 172, 292, 412, 508, 628, 748, 868, 988, 1108, 1228, 1348];
        for (let x = 28; x < 1389; x += 24) white += weekends.includes(x) ? `M${X(x)} 0h1v474h-1zM${X(x) + 2} 0h1v474h-1z` : `M${X(x)} 0h1v474h-1z`;
        // Candles
        let prev = 55;
        for (let i = 1, s = 0; i <= 1276; i++) {
          while (swings[s + 1][0] < i) s++;
          const [x0, y0] = swings[s], [x1, y1] = swings[s + 1];
          const y = y0 + ((y1 - y0) * (i - x0)) / (x1 - x0) + (rnd() - 0.5) * 11;
          const wick = rnd() > 0.9 ? 14 : 6;
          const top = Math.round(Math.min(prev, y) - rnd() * wick);
          const bottom = Math.round(Math.max(prev, y) + rnd() * wick);
          const bar = `M${X(i)} ${top}h1V${Math.max(bottom, top + 4)}h-1z`;
          if (rnd() < (y < prev ? 0.75 : 0.25)) up += bar; else down += bar;
          prev = y;
        }
        // Volumes
        for (let i = 0; i <= 1271; i++) {
          let y = 438 + rnd() * 12;
          for (const [px, py] of peaks) y = Math.min(y, py + Math.abs(i - px) * 7 + rnd() * 8);
          const hour = (i + 20) % 24;
          if (hour < 3) y = Math.max(y, 446 + rnd() * 8);
          if (hour === 0) y = 460 + rnd() * 12;
          if (i > 508 && i < 521) y = 474 - (i - 508) - rnd() * 4;
          if (i > 526 && i < 532) y = 473;
          vol += `M${X(i)} ${Math.round(y)}h1V474h-1z`;
        }
        dates.forEach((d, i) => {
          const x = i ? X(128 + (i - 1) * 96) : 0;
          text += `<path d="M${x} 475h1v3h-1z" fill="#222" /><text x="${x + (i ? 1 : 3)}" y="487">${d}</text>`;
        });
        const hx = X(1253);
        svg.innerHTML = `
          <g shape-rendering="crispEdges">
            <path d="${grey}" fill="#b2b2b2" /><path d="${white}" fill="#e8e8e8" />
            <path d="${vol}" fill="#33bff3" />
            <path d="${up}" fill="#075a7d" /><path d="${down}" fill="#262626" />
            <rect x="0" y="206" width="${right}" height="1" fill="#f15a24" />
            <path d="M0 473h${right}v2H0z" fill="#50555c" /><path d="M0 473h${X(1272)}v2H0z" fill="#2a5f7c" />
            <path d="M${right - 1} 0h1v475h-1z" fill="#50555c" />
          </g>
          <g fill="#1e1e28">${text}</g>
          <path d="M${right - 15} 11h5v74h-5" fill="none" stroke="#111" />
          <text transform="translate(${right - 17} 68) rotate(-90)" fill="#111">250 pips</text>
          <rect x="${right - 5}" y="200" width="49" height="14" rx="4" fill="#e0481c" /><text x="${right + 2}" y="211" fill="#fff">133.000</text>
          <path d="M${hx + 2} 465h17l5-5 5 5h9q2 0 2 2v10q0 2-2 2h-36q-2 0-2-2v-10q0-2 2-2z" fill="#c8c8c8" stroke="#333" stroke-width="1.300" />
          <path d="M${hx + 3} 469v8M${hx + 5} 469v8" stroke="#fff" stroke-dasharray="1 1" />`;
      }

      function drawEquity(svg, width) {
        const right = width - 45;
        const X = (i) => 11 + ((width - 79) * i) / 100;
        const pts = (a) => a.map(([i, y]) => `${X(i)},${y}`).join(" ");
        const high = [[0,255],[1,114],[2,114],[15,111.5],[17,110],[18,110],[19,107],[22,107],[30,105],[36,104],[52,102],[53,98],[57,97],[58,77],[59,54],[60,54],[61,52],[66,50],[67,46],[68,31],[69,29],[70,20],[71,20],[82,16],[83,12],[90,11],[100,11]];
        const low = [[1,257],[2,114],[4,114],[5,115],[6,113],[16,112],[17,110],[18,111],[19,113],[20,108],[21,108],[22,111],[23,107],[35,105],[36,106],[37,104],[52,103],[53,111],[54,99],[57,98],[58,125],[59,83],[60,54],[61,55],[63,52],[66,51],[67,63],[68,84],[69,34],[70,30],[71,20],[73,21],[76,19],[82,17],[83,17],[84,12],[86,12],[87,13],[88,12],[100,11]];
        let grid = "", ticks = "", text = "";
        for (let i = 0; i <= 100; i += 5) {
          const x = Math.round(X(i));
          grid += `M${x} 0h1v268h-1z`;
          ticks += `M${x} 268h1v4h-1z`;
          text += `<text x="${x}" y="283" text-anchor="middle">${i}</text>`;
        }
        [[25, 10000], [71, 8000], [118, 6000], [165, 4000], [211, 2000]].forEach(([y, v]) => {
          grid += `M0 ${y}v1h${right}v-1z`;
          ticks += `M${right} ${y}h4v1h-4z`;
          text += `<text x="${right + 7}" y="${y + 3}">${v}</text>`;
        });
        svg.innerHTML = `
          <path d="${grid}" fill="#1c1c20" />
          <path d="${ticks}M0 268h${right}v1H0zM${right} 0h1v269h-1z" fill="#b4b4b4" />
          <polygon points="${pts(high)} ${pts(low.slice().reverse())}" fill="#6c6c6c" stroke="#8c8c8c" />
          <polyline points="${pts([[0, 255], [100, 11], [101, 11]])}" fill="none" stroke="#ffff00" stroke-width="2" />
          <g fill="#b4b4b4">${text}</g>`;
      }

      // Redraw each chart whenever its box changes size
      function watch(id, draw) {
        const svg = document.getElementById(id);
        new ResizeObserver(() => draw(svg, svg.parentElement.clientWidth)).observe(svg.parentElement);
      }
      watch("price", drawPrice);
      watch("equity", drawEquity);
    </script>
  </body>
</html>
